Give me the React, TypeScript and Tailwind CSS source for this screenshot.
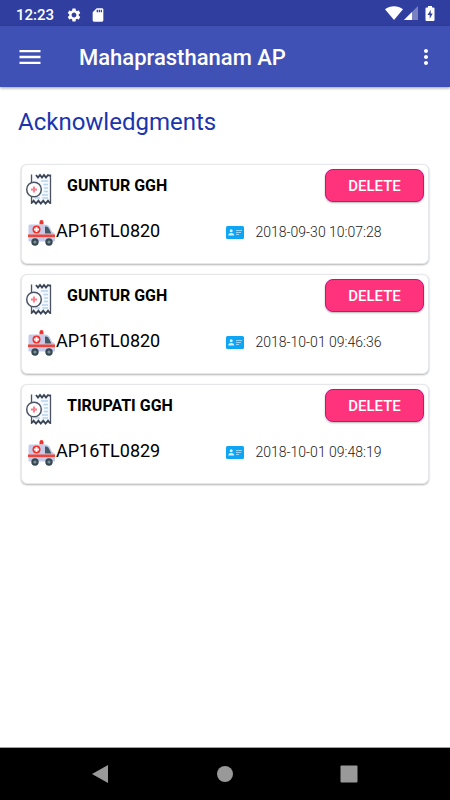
import { MdSettings, MdSdCard, MdMenu, MdMoreVert } from "react-icons/md";

const records = [
    { id: 1, hospital: "GUNTUR GGH", vehicle: "AP16TL0820", date: "2018-09-30 10:07:28" },
    { id: 2, hospital: "GUNTUR GGH", vehicle: "AP16TL0820", date: "2018-10-01 09:46:36" },
    { id: 3, hospital: "TIRUPATI GGH", vehicle: "AP16TL0829", date: "2018-10-01 09:48:19" },
];

function ReceiptIcon() {
    return (
        <svg width="28" height="34" viewBox="0 0 28 34" fill="none" aria-hidden="true">
            <path d="M7 2.5h18.500v29H7z" fill="#f6f9fd" />
            <path d="M6.5 2.5V11M6.5 24v8M25.5 2.5V32" stroke="#4b5464" strokeWidth="1.3" />
            <path d="M11 3l2 2.5L15 3l2 2.5L19 3l2 2.5L23 3l2.500 1" stroke="#3b4454" strokeWidth="1.8" />
            <path d="M6.500 31l2.100-2.400L11 31.500l2.400-2.800 2.400 2.800 2.400-2.800 2.400 2.800 2.400-2.800 2.500 2.800" stroke="#3b4454" strokeWidth="1.8" />
            <path d="M16 9h7M18.500 12.500H23M19 16h4M19 19.500h4M17 23h6M10 26h5M17.500 26H23" stroke="#b5d2ee" strokeWidth="1.7" />
            <circle cx="9" cy="17.5" r="7.3" fill="#fff" stroke="#4b5464" strokeWidth="1.5" />
            <path d="M9 14.5v6M6 17.5h6" stroke="#ff7b8a" strokeWidth="1.9" />
        </svg>
    );
}

function AmbulanceIcon() {
    return (
        <svg width="28" height="28" viewBox="0 0 28 28" aria-hidden="true">
            <path d="M12.5 5.5V3a2 2 0 0 1 4 0v2.5z" fill="#f3332b" />
            <path d="M3 5.500h15c3 0 4.500 1.500 5.700 4.500l1.500 3c2 .5 2.800 1.600 2.800 3.500v6H1.500V7q0-1.500 1.500-1.500z" fill="#c6cbea" />
            <path d="M18 7.500h1.200c1.500 0 2.200 1.200 3.200 3l2 4h-6.400z" fill="#445a64" />
            <path d="M1 15.5h27v2.600H1z" fill="#f04438" />
            <circle cx="9.5" cy="10.5" r="4" fill="#f3332b" />
            <path d="M9.5 8v5M7 10.500h5" stroke="#fff" strokeWidth="1.9" />
            <circle cx="8" cy="23" r="3.7" fill="#37474f" />
            <circle cx="22" cy="23" r="3.7" fill="#37474f" />
            <circle cx="8" cy="23" r="1.6" fill="#78909c" />
            <circle cx="22" cy="23" r="1.6" fill="#78909c" />
        </svg>
    );
}

function IdCardIcon() {
    return (
        <svg width="18" height="13" viewBox="0 0 18 13" aria-hidden="true">
            <rect width="18" height="13" rx="1.5" fill="#0fa5f5" />
            <circle cx="5.2" cy="4.8" r="1.5" fill="#d6f0ff" />
            <path d="M2.200 9.500c0-1.700 1.300-2.500 3-2.500s3 .8 3 2.500z" fill="#d6f0ff" />
            <path d="M10 4.500h6M10 6.500h5M10 8.500h3" stroke="#8fd4fb" strokeWidth="1.2" />
        </svg>
    );
}

function StatusBar() {
    return (
        <div className="flex h-[26px] items-center bg-[#303f9f] pl-4 pr-[15px] pt-1 text-white">
            <span className="text-[15px] leading-5 font-medium">12:23</span>
            <MdSettings className="ml-3 size-4" />
            <MdSdCard className="ml-2 size-4" />
            <div className="ml-auto flex items-center pb-1">
                <svg width="18" height="14" viewBox="0 0 18 14" fill="#fff" aria-hidden="true">
                    <path d="M0 3.200C5-.9 13-.9 18 3.200L9 14z" />
                </svg>
                <svg width="14" height="14" viewBox="0 0 14 14" className="ml-px" aria-hidden="true">
                    <path d="M14 0v14H0z" fill="#fff" opacity=".35" />
                    <path d="M8 6v8H0z" fill="#fff" />
                </svg>
                <svg width="10" height="15" viewBox="0 0 10 15" className="ml-[7px]" aria-hidden="true">
                    <path d="M3 0h4v1.500h1.500q1 0 1 1V14q0 1-1 1h-7q-1 0-1-1V2.500q0-1 1-1H3z" fill="#fff" />
                    <path d="M5.800 3.800L2.500 9h2.200v3.700L7.700 7.500H5.600z" fill="#303f9f" />
                </svg>
            </div>
        </div>
    );
}

function Card({ hospital, vehicle, date }: { hospital: string; vehicle: string; date: string }) {
    return (
        <li className="rounded-md border border-gray-200 bg-white pt-1 pr-1 pb-4 pl-[3px] shadow-[0_1px_2px_rgba(0,0,0,0.3)]">
            <div className="flex items-start">
                <div className="pt-[3px]">
                    <ReceiptIcon />
                </div>
                <h2 className="ml-[14px] text-base leading-[33px] font-bold text-black">{hospital}</h2>
                <button className="ml-auto h-[33px] w-[99px] rounded-lg border border-[#d5078d] bg-[#ff337b] pt-px text-[15px] font-medium text-white shadow-[0_1px_2px_rgba(0,0,0,0.3)]">
                    DELETE
                </button>
            </div>
            <div className="flex items-start pt-[13px]">
                <div className="flex flex-1 items-start pl-[2px]">
                    <AmbulanceIcon />
                    <span className="ml-px text-lg leading-6 text-black">{vehicle}</span>
                </div>
                <div className="flex flex-1 items-center leading-[26px]">
                    <IdCardIcon />
                    <span className="ml-3 text-sm leading-[26px] font-light text-[#222]">{date}</span>
                </div>
            </div>
        </li>
    );
}

function App() {
    return (
        <div className="flex min-h-screen flex-col bg-white font-[Roboto,sans-serif]">
            <StatusBar />
            <header className="flex h-[61px] items-center bg-[#3f51b5] pl-4 pr-3 text-white shadow-[0_1px_3px_rgba(0,0,0,0.4)]">
                <button aria-label="Open menu">
                    <MdMenu className="size-7" />
                </button>
                <h1 className="ml-[35px] pt-[2px] text-[22px] font-medium">Mahaprasthanam AP</h1>
                <button aria-label="More options" className="ml-auto">
                    <MdMoreVert className="size-6" />
                </button>
            </header>
            <main className="flex-1 px-[21px]">
                <h2 className="-ml-[3px] pt-4 text-2xl leading-[38px] text-[#1a35ae]">Acknowledgments</h2>
                <ul className="flex flex-col gap-[10px] pt-[23px]">
                    {records.map((r) => (
                        <Card key={r.id} hospital={r.hospital} vehicle={r.vehicle} date={r.date} />
                    ))}
                </ul>
            </main>
            <nav className="flex h-[53px] items-center justify-center gap-[106px] border-t border-gray-400 bg-black">
                <button aria-label="Back">
                    <svg width="18" height="18" viewBox="0 0 18 18" fill="#999">
                        <path d="M16 0v18L0 9z" />
                    </svg>
                </button>
                <button aria-label="Home">
                    <svg width="18" height="18" viewBox="0 0 18 18" fill="#999">
                        <circle cx="9" cy="9" r="8" />
                    </svg>
                </button>
                <button aria-label="Recent apps">
                    <svg width="18" height="18" viewBox="0 0 18 18" fill="#999">
                        <rect x="0.5" y="0.5" width="17" height="17" rx="1" />
                    </svg>
                </button>
            </nav>
        </div>
    );
}

export default App;
